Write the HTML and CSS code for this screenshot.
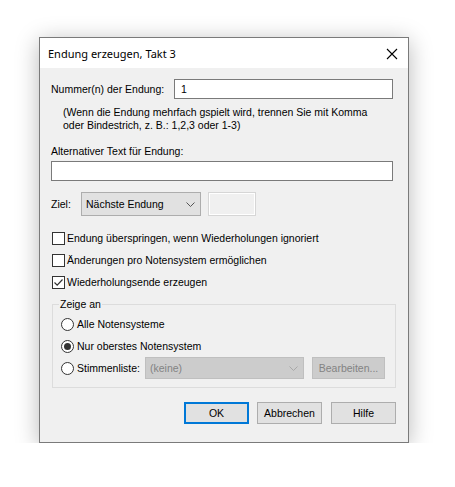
FILE: index.html
```html
<!DOCTYPE html>
<html lang="de">
<head>
    <meta charset="UTF-8">
    <title>Endung erzeugen, Takt 3</title>
    <link rel="stylesheet" href="styles.css">
</head>
<body>

<div class="dialog">
    <div class="titlebar">
        <span class="title">Endung erzeugen, Takt 3</span>
        <svg class="close" width="12" height="12" viewBox="0 0 12 12">
            <path d="M1 1 L11 11 M11 1 L1 11" stroke="#000" stroke-width="1.1" fill="none"/>
        </svg>
    </div>

    <div class="content">
        <div class="number-row">
            <span class="number-label">Nummer(n) der Endung:</span>
            <div class="field number-field">1</div>
        </div>

        <p class="hint">(Wenn die Endung mehrfach gspielt wird, trennen Sie mit Komma<br>oder Bindestrich, z. B.: 1,2,3 oder 1-3)</p>

        <div class="alt-label">Alternativer Text für Endung:</div>
        <div class="field alt-field"></div>

        <div class="target-row">
            <span class="target-label">Ziel:</span>
            <div class="combo">
                <span>Nächste Endung</span>
                <svg class="chevron" width="9" height="5" viewBox="0 0 9 5">
                    <path d="M0.5 0.5 L4.5 4.5 L8.5 0.5" stroke="#555" stroke-width="1" fill="none"/>
                </svg>
            </div>
            <div class="empty-box"></div>
        </div>

        <div class="checks">
            <div class="check-row"><span class="checkbox"></span><span>Endung überspringen, wenn Wiederholungen ignoriert</span></div>
            <div class="check-row"><span class="checkbox"></span><span>Änderungen pro Notensystem ermöglichen</span></div>
            <div class="check-row">
                <span class="checkbox">
                    <svg width="11" height="11" viewBox="0 0 11 11">
                        <path d="M1.5 5.5 L4.2 8.2 L9.5 2.5" stroke="#333" stroke-width="1.2" fill="none"/>
                    </svg>
                </span>
                <span>Wiederholungsende erzeugen</span>
            </div>
        </div>

        <fieldset class="group">
            <legend>Zeige an</legend>
            <div class="radio-row"><span class="radio"></span><span>Alle Notensysteme</span></div>
            <div class="radio-row"><span class="radio selected"></span><span>Nur oberstes Notensystem</span></div>
            <div class="radio-row">
                <span class="radio"></span><span>Stimmenliste:</span>
                <div class="combo disabled voice-combo">
                    <span>(keine)</span>
                    <svg class="chevron" width="9" height="5" viewBox="0 0 9 5">
                        <path d="M0.5 0.5 L4.5 4.5 L8.5 0.5" stroke="#a8a8a8" stroke-width="1" fill="none"/>
                    </svg>
                </div>
                <div class="button disabled edit-button">Bearbeiten...</div>
            </div>
        </fieldset>

        <div class="buttons">
            <div class="button default">OK</div>
            <div class="button">Abbrechen</div>
            <div class="button help">Hilfe</div>
        </div>
    </div>
</div>

</body>
</html>
```

FILE: styles.css
```css
body {
    margin: 0;
    padding: 37px 0 0 39px;
    background-color: #ffffff;
    font-family: "Liberation Sans", Arial, sans-serif;
    font-size: 10.5px;
    line-height: 13px;
    color: #000;
}
.dialog {
    width: 368px;
    height: 404px;
    border: 1px solid #7a7a7a;
    background-color: #f0f0f0;
    box-shadow: 0 4px 22px rgba(0, 0, 0, 0.28);
    display: flex;
    flex-direction: column;
}
.titlebar {
    height: 30px;
    background: #ffffff;
    display: flex;
    align-items: center;
    justify-content: space-between;
    padding: 0 10px 0 8px;
}
.title {
    font-family: "Noto Sans", "Open Sans", sans-serif;
    font-size: 11px;
    margin-top: 1px;
}
.close {
    margin-right: 0;
    margin-top: 1px;
}
.content {
    padding: 11px 11px 0 11px;
}
.field {
    box-sizing: border-box;
    height: 20px;
    background: #ffffff;
    border: 1px solid #7a7a7a;
    padding: 3px 6px 0 6px;
}
.number-row {
    display: flex;
    align-items: center;
}
.number-label {
    width: 123px;
}
.number-field {
    width: 219px;
}
.hint {
    margin: 7px 0 0 12px;
}
.alt-label {
    margin-top: 13px;
}
.alt-field {
    margin-top: 3px;
    width: 342px;
}
.target-row {
    display: flex;
    align-items: center;
    margin-top: 11px;
}
.target-label {
    width: 30px;
}
.combo {
    box-sizing: border-box;
    width: 120px;
    height: 24px;
    background: #e1e1e1;
    border: 1px solid #adadad;
    display: flex;
    align-items: center;
    justify-content: space-between;
    padding: 0 5px 0 4px;
}
.chevron {
    margin-top: 1px;
}
.empty-box {
    box-sizing: border-box;
    width: 48px;
    height: 24px;
    margin-left: 7px;
    border: 1px solid #d6d6d6;
    box-shadow: inset 0 0 0 1px #ffffff;
}
.checks {
    margin-top: 16px;
}
.check-row {
    display: flex;
    align-items: center;
    height: 13px;
    margin-bottom: 9px;
    margin-left: 1px;
}
.checkbox {
    box-sizing: border-box;
    width: 13px;
    height: 13px;
    border: 1px solid #333333;
    background: #ffffff;
    margin-right: 2px;
    display: flex;
    align-items: center;
    justify-content: center;
}
.group {
    box-sizing: border-box;
    width: 344px;
    margin: 3px 0 0 1px;
    padding: 2px 8px 8px 8px;
    border: 1px solid #dcdcdc;
}
.group legend {
    padding: 0 1px;
    margin-left: -2px;
}
.radio-row {
    display: flex;
    align-items: center;
    height: 22px;
}
.radio {
    box-sizing: border-box;
    width: 13px;
    height: 13px;
    border: 1px solid #333333;
    border-radius: 50%;
    background: #ffffff;
    margin-right: 3px;
    display: flex;
    align-items: center;
    justify-content: center;
}
.radio.selected::after {
    content: "";
    width: 7px;
    height: 7px;
    border-radius: 50%;
    background: #333333;
}
.voice-combo {
    width: 159px;
    height: 22px;
    margin-left: 5px;
    padding-left: 4px;
}
.combo.disabled, .button.disabled {
    background: #cccccc;
    border-color: #bfbfbf;
    color: #838383;
}
.buttons {
    display: flex;
    justify-content: flex-end;
    gap: 8px;
    margin: 14px 0 0 0;
    width: 345px;
}
.button {
    box-sizing: border-box;
    width: 65px;
    height: 22px;
    background: #e1e1e1;
    border: 1px solid #adadad;
    display: flex;
    align-items: center;
    justify-content: center;
}
.button.default {
    border: 2px solid #0078d7;
}
.button.help {
    margin-left: 1px;
}
.edit-button {
    width: 73px;
    margin-left: 8px;
}
```
